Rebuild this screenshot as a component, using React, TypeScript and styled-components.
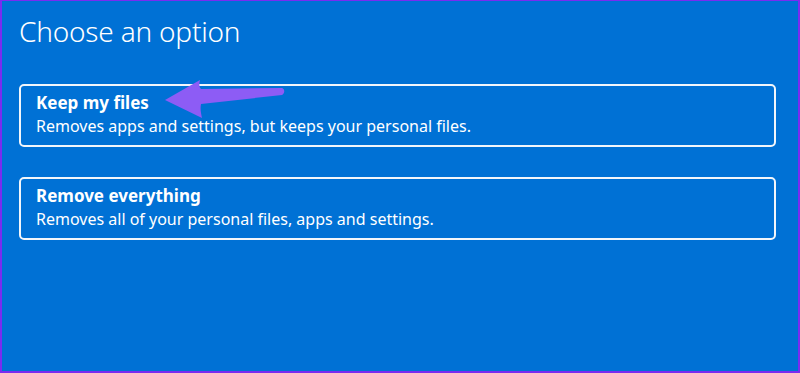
import React from "react";
import styled, { createGlobalStyle } from "styled-components";

const GlobalStyle = createGlobalStyle`
  html, body {
    margin: 0;
    padding: 0;
    background: #0071d5;
  }
`;

const Screen = styled.div`
  box-sizing: border-box;
  width: 800px;
  height: 373px;
  background: #0071d5;
  border: 2px solid #7a2cf0;
  border-top-width: 1px;
  padding: 12px 22px 0 17px;
  display: flex;
  flex-direction: column;
  font-family: "Noto Sans", "Open Sans", sans-serif;
  color: #ffffff;
`;

const Title = styled.h1`
  margin: 0;
  font-size: 28px;
  font-weight: 300;
  line-height: 36px;
  letter-spacing: -0.2px;
`;

const OptionList = styled.div`
  display: flex;
  flex-direction: column;
  gap: 30px;
  margin-top: 35px;
`;

const OptionCard = styled.div`
  position: relative;
  box-sizing: border-box;
  height: 63px;
  border: 2px solid #f2f6fb;
  border-radius: 5px;
  padding: 5px 15px 0 15px;
  display: flex;
  flex-direction: column;
`;

const OptionTitle = styled.div`
  font-size: 17px;
  font-weight: 700;
  line-height: 24px;
`;

const OptionText = styled.div`
  font-size: 16px;
  font-weight: 400;
  line-height: 23px;
`;

const Pointer = styled.svg`
  position: absolute;
  left: 140px;
  top: -10px;
`;

const ArrowMark: React.FC = () => (
  <Pointer width="130" height="46" viewBox="0 0 130 46">
    <path
      d="M4 24 L39 4 C38 8 38 11 40 13 L121 12 C124 13 124 17 121 19 L40 28 C39 33 40 37 41 42 Z"
      fill="#8d5cf5"
    />
  </Pointer>
);

type Option = { title: string; text: string; pointed?: boolean };

const options: Option[] = [
  {
    title: "Keep my files",
    text: "Removes apps and settings, but keeps your personal files.",
    pointed: true,
  },
  {
    title: "Remove everything",
    text: "Removes all of your personal files, apps and settings.",
  },
];

export default function App() {
  return (
    <>
      <GlobalStyle />
      <Screen>
        <Title>Choose an option</Title>
        <OptionList>
          {options.map((o) => (
            <OptionCard key={o.title}>
              <OptionTitle>{o.title}</OptionTitle>
              <OptionText>{o.text}</OptionText>
              {o.pointed && <ArrowMark />}
            </OptionCard>
          ))}
        </OptionList>
      </Screen>
    </>
  );
}
